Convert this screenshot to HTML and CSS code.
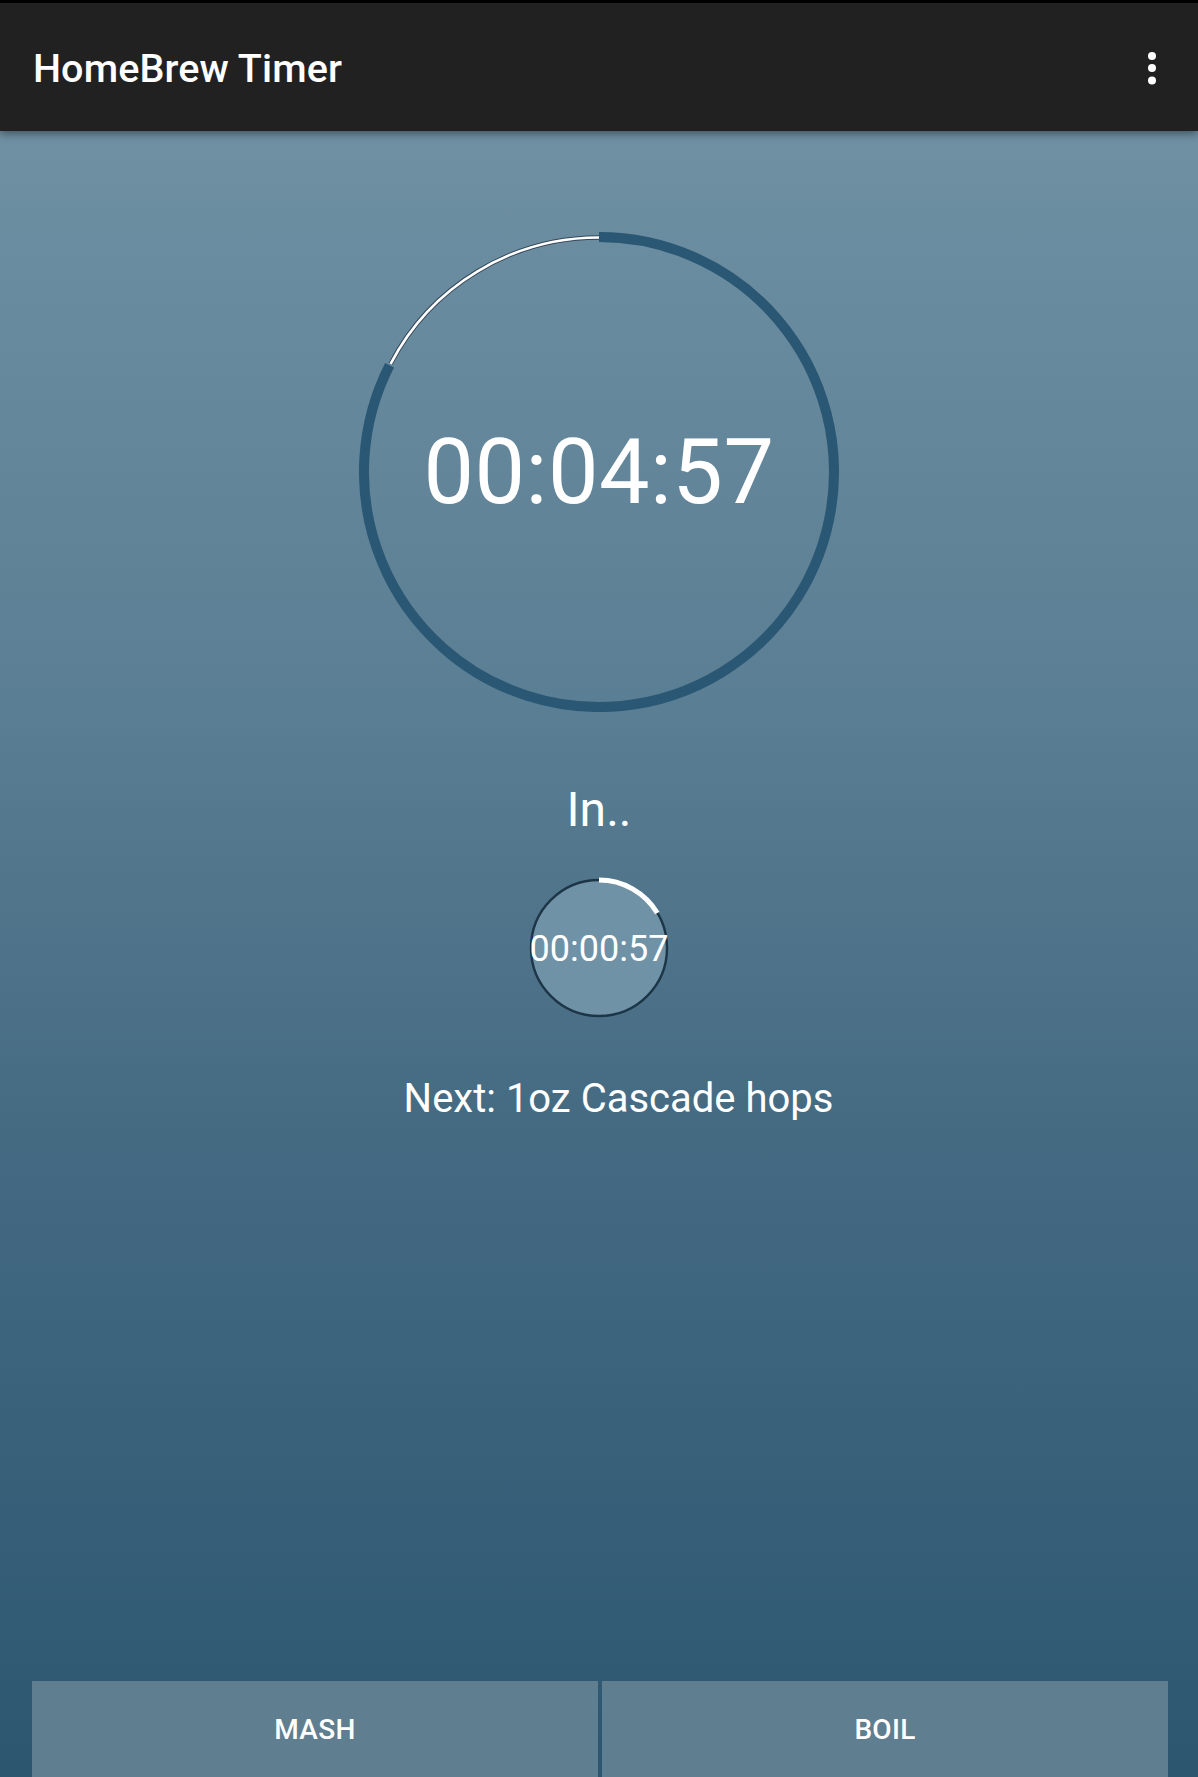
FILE: index.html
```html
<!DOCTYPE html>
<html>
<head>
<meta charset="utf-8">
<link rel="stylesheet" href="styles.css">
</head>
<body>
<div class="screen">
  <div class="statusbar"></div>
  <header class="toolbar">
    <h1 class="title">HomeBrew Timer</h1>
    <svg class="overflow" width="12" height="36" viewBox="0 0 12 36">
      <circle cx="6" cy="6" r="4" fill="#fff"/>
      <circle cx="6" cy="18" r="4" fill="#fff"/>
      <circle cx="6" cy="30.5" r="4" fill="#fff"/>
    </svg>
  </header>
  <main class="content">
    <div class="big-timer">
      <svg class="ring" width="480" height="480" viewBox="0 0 480 480">
        <path d="M240 5 A235 235 0 1 1 30.6 133.3" fill="none" stroke="#2a5773" stroke-width="10"/>
        <path d="M31.6 131.8 A235 235 0 0 1 240 5.5" fill="none" stroke="#33475a" stroke-width="4.5"/>
        <path d="M31.6 131.8 A235 235 0 0 1 240 5.5" fill="none" stroke="#ffffff" stroke-width="2.6"/>
      </svg>
      <div class="big-time">00:04:57</div>
    </div>
    <div class="label-in">In..</div>
    <div class="small-timer">
      <svg class="ring" width="144" height="144" viewBox="0 0 144 144">
        <circle cx="72" cy="72" r="68" fill="#7092a6" stroke="#1c3547" stroke-width="2.4"/>
        <path d="M72 4 A68 68 0 0 1 130.3 37" fill="none" stroke="#ffffff" stroke-width="5"/>
      </svg>
      <div class="small-time">00:00:57</div>
    </div>
    <div class="next">Next: 1oz Cascade hops</div>
    <div class="actions">
      <button class="action">MASH</button>
      <button class="action">BOIL</button>
    </div>
  </main>
</div>
</body>
</html>
```
FILE: styles.css
```css
html, body {
  margin: 0;
  padding: 0;
}
body {
  width: 1198px;
  height: 1777px;
  overflow: hidden;
  font-family: Roboto, "Noto Sans", sans-serif;
  color: #fff;
}
.screen {
  display: flex;
  flex-direction: column;
  height: 1777px;
}
.statusbar {
  height: 3px;
  background: #000;
}
.toolbar {
  height: 128px;
  background: #212121;
  display: flex;
  align-items: center;
  justify-content: space-between;
  padding: 0 40px 0 33px;
  box-shadow: 0 3px 8px rgba(0, 0, 0, 0.4);
  position: relative;
  z-index: 2;
}
.title {
  margin: 0;
  font-size: 39.5px;
  font-weight: 500;
  letter-spacing: 0.1px;
  padding-top: 2px;
}
.overflow {
  display: block;
  margin-top: 2px;
}
.content {
  flex: 1;
  display: flex;
  flex-direction: column;
  align-items: center;
  background: linear-gradient(to bottom, #6f90a3 0%, #5a7e93 35%, #456b83 60%, #2c5670 100%);
}
.big-timer {
  display: grid;
  place-items: center;
  margin-top: 101px;
  width: 480px;
  height: 480px;
}
.big-timer > * {
  grid-area: 1 / 1;
}
.ring {
  display: block;
}
.big-time {
  font-size: 90px;
  font-weight: 400;
  line-height: 1;
  letter-spacing: 0.5px;
  padding-top: 2px;
}
.label-in {
  margin-top: 70px;
  font-size: 48px;
  line-height: 56px;
}
.small-timer {
  display: grid;
  place-items: center;
  margin-top: 38px;
  width: 144px;
  height: 144px;
}
.small-timer > * {
  grid-area: 1 / 1;
}
.small-time {
  font-size: 36px;
  line-height: 1;
  padding-top: 2px;
}
.next {
  margin-top: 55px;
  margin-left: 39px;
  font-size: 40px;
  line-height: 47px;
}
.actions {
  margin-top: auto;
  align-self: stretch;
  display: flex;
  gap: 4px;
  padding: 0 30px 0 32px;
}
.action {
  flex: 1;
  height: 96px;
  border: none;
  margin: 0;
  background: #5f7e90;
  color: #fff;
  font-family: Roboto, "Noto Sans", sans-serif;
  font-size: 28px;
  font-weight: 500;
  letter-spacing: 0.3px;
}
```
